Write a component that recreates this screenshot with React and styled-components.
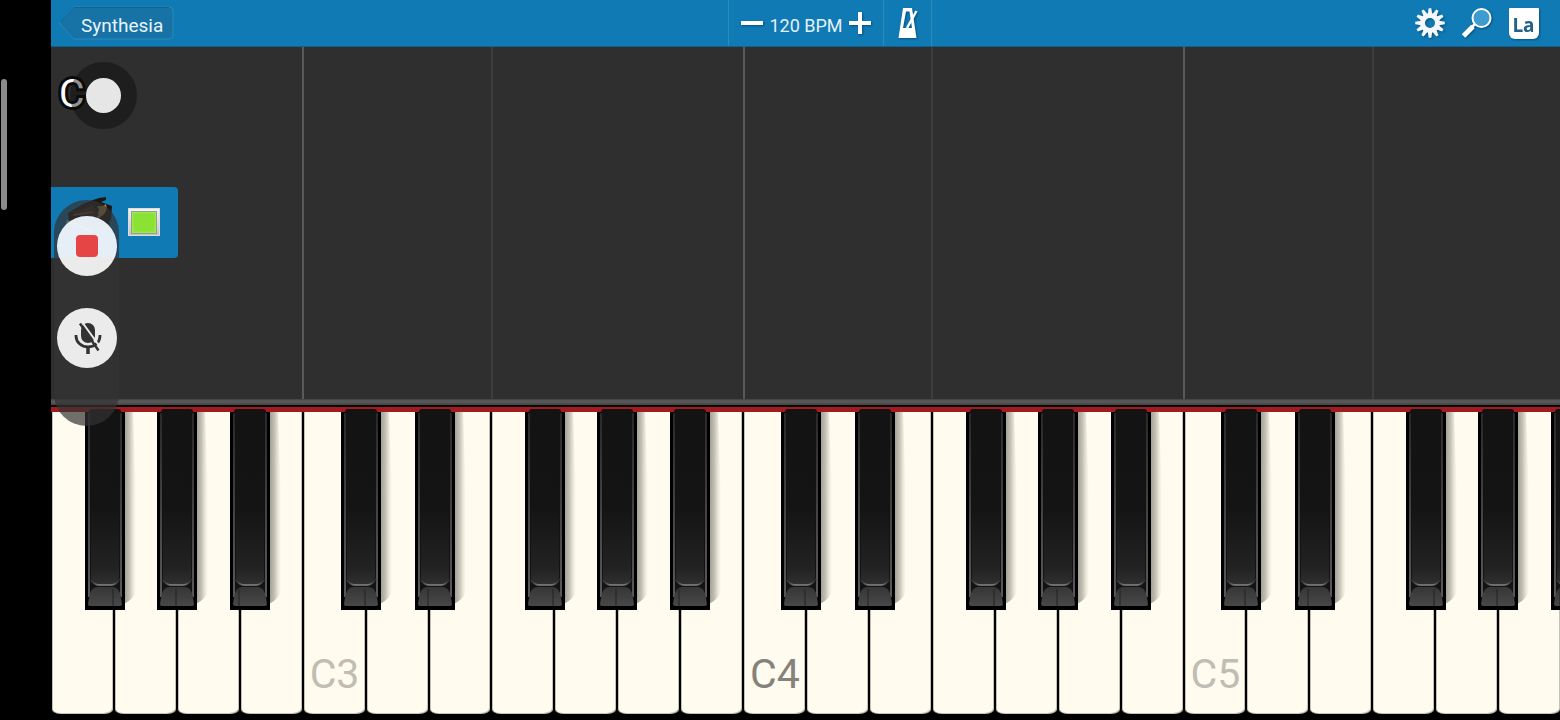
import React from "react";
import styled, { createGlobalStyle, css } from "styled-components";

const BLUE = "#107ab4";
const IVORY = "#fffbee";
const STAGE = "#2f2f2f";

const GlobalStyle = createGlobalStyle`
  * {
    box-sizing: border-box;
  }
  body {
    margin: 0;
    background: #000;
    font-family: Roboto, "Liberation Sans", sans-serif;
  }
  button {
    font-family: inherit;
    border: 0;
    padding: 0;
    margin: 0;
    background: none;
    cursor: pointer;
  }
`;

const NOTES = ["F", "G", "A", "B", "C", "D", "E"];
// how far each black key hangs over the next white key
const OVERHANG = { F: 12, G: 21, A: 31, C: 16, D: 27 };

const KEYS = Array.from({ length: 24 }, (_, i) => ({
  id: i,
  note: NOTES[i % 7],
  octave: 2 + Math.floor((i + 3) / 7)
}));

const Screen = styled.div`
  position: relative;
  display: flex;
  min-height: 100vh;
  overflow: hidden;
`;

const Gutter = styled.div`
  flex: 0 0 51px;
  padding: 79px 0 0 1px;
  background: #000;
`;

const ScrollThumb = styled.div`
  width: 6px;
  height: 131px;
  border-radius: 3px;
  background: #8b8b8b;
`;

const App = styled.main`
  flex: 1;
  min-width: 0;
  display: flex;
  flex-direction: column;
  overflow: hidden;
`;

const Toolbar = styled.header`
  display: grid;
  grid-template-columns: 1fr auto 1fr;
  height: 47px;
  background: ${BLUE};
  border-bottom: 1px solid #0d6291;
  color: #fff;
`;

const BackButton = styled.button`
  position: relative;
  display: flex;
  align-items: center;
  align-self: center;
  justify-self: start;
  width: 116px;
  height: 34px;
  margin-left: 7px;
  padding: 4px 0 0 23px;
  color: #e9f4fa;
  font-size: 19px;

  svg {
    position: absolute;
    inset: 0;
  }
  span {
    position: relative;
  }
`;

const Tempo = styled.div`
  display: flex;
  align-items: center;
  justify-content: center;
  gap: 6px;
  width: 155px;
  border-left: 1px solid #2c8abd;
`;

const TempoValue = styled.output`
  padding-top: 4px;
  color: #e4f1f8;
  font-size: 18px;
`;

const IconButton = styled.button`
  display: flex;
  align-items: center;
  justify-content: center;
  width: ${({ $width }) => $width}px;

  svg,
  span {
    filter: drop-shadow(1px 1px 1px rgba(0, 40, 70, 0.5));
  }
`;

const MetronomeButton = styled(IconButton)`
  margin-right: auto;
  border-left: 1px solid #2c8abd;
  border-right: 1px solid #2c8abd;
`;

const Tools = styled.div`
  display: flex;
  justify-content: flex-end;
  padding-right: 13px;
`;

const keyGrid = css`
  display: grid;
  grid-template-columns: repeat(24, 1fr);
`;

const Stage = styled.section`
  position: relative;
  flex: 1;
  display: flex;
  flex-direction: column;
  min-height: 352px;
  background: ${STAGE};
`;

const Lanes = styled.div`
  ${keyGrid}
  flex: 1;
  margin: 0 -1px 0 -1px;
`;

const LINE = { C: "2px solid #595959", F: "2px solid #3d3d3d" };

const Lane = styled.div`
  border-left: ${({ $note, $first }) => (!$first && LINE[$note]) || 0};
`;

const NoteName = styled.div`
  position: absolute;
  top: 24px;
  left: 8px;
  color: #fff;
  font-size: 39px;
  line-height: 47px;
  -webkit-text-stroke: 6px #0b0b0b;
  paint-order: stroke fill;
`;

const TouchDot = styled.div`
  position: absolute;
  top: 15px;
  left: 19px;
  width: 67px;
  height: 67px;
  border: 16px solid rgba(10, 10, 10, 0.45);
  border-radius: 50%;

  &::after {
    content: "";
    display: block;
    height: 35px;
    border-radius: 50%;
    background: #e6e6e6;
  }
`;

const DeviceCard = styled.div`
  position: absolute;
  top: 140px;
  left: 0;
  display: flex;
  align-items: flex-start;
  width: 127px;
  height: 71px;
  padding: 8px 0 0 10px;
  border-radius: 0 4px 4px 0;
  background: ${BLUE};
`;

const StatusLight = styled.div`
  width: 32px;
  height: 28px;
  margin: 13px 0 0 13px;
  padding: 2px;
  border: 1px solid #dcdcdc;
  background: linear-gradient(#f4f4f4, #c4c4c4);

  &::after {
    content: "";
    display: block;
    height: 21px;
    border: 1px solid #98a08d;
    background: #8ae234;
    box-shadow: inset 0 0 2px 1px #a4ea5c;
  }
`;

const Rail = styled.div`
  height: 8px;
  border-bottom: 2px solid #080808;
  background: linear-gradient(#404040, #5c5c5c 35%, #464646);
`;

const Felt = styled.div`
  height: 5px;
  background: #a21b20;
`;

const Keyboard = styled.section`
  ${keyGrid}
  height: 308px;
  margin-right: -1px;
  padding-bottom: 6px;
`;

const WhiteKey = styled.div`
  position: relative;
  display: flex;
  align-items: flex-end;
  padding: 0 0 15px 6px;
  border-left: 1px solid #000;
  border-right: 1px solid #000;
  border-radius: 0 0 10px 10px / 0 0 5px 5px;
  background: ${IVORY};
  box-shadow: inset 1px 0 #c4c1b6, inset -1px -1px #c4c1b6;
  color: ${({ $middle }) => ($middle ? "#85827b" : "#c0bdb2")};
  font-size: 41px;
  line-height: 50px;
`;

const BlackKeySlot = styled.div`
  position: absolute;
  z-index: 1;
  top: -5px;
  right: ${({ $overhang }) => -$overhang - 13}px;
  height: 206px;
  pointer-events: none;
`;

const Recorder = styled.aside`
  position: absolute;
  z-index: 2;
  top: 200px;
  left: 54px;
  display: flex;
  flex-direction: column;
  align-items: center;
  gap: 32px;
  width: 65px;
  height: 226px;
  padding-top: 16px;
  border-radius: 33px;
  background: rgba(51, 51, 51, 0.7);
`;

const RecorderButton = styled.button`
  display: flex;
  align-items: center;
  justify-content: center;
  width: 60px;
  height: 60px;
  border-radius: 50%;
  background: rgba(255, 255, 255, 0.9);
`;

const StopButton = styled(RecorderButton)`
  background: linear-gradient(rgba(240, 248, 255, 0.95) 41px, #ebebeb 41px);
`;

const StopMark = styled.span`
  width: 22px;
  height: 22px;
  border-radius: 4px;
  background: #e64545;
`;

const KeyDefs = () => (
  <svg width="0" height="0" style={{ position: "absolute" }} aria-hidden="true">
    <defs>
      <linearGradient id="keyTop" x1="0" y1="0" x2="0" y2="1">
        <stop offset="0" stopColor="#131313" />
        <stop offset="0.55" stopColor="#141414" />
        <stop offset="0.9" stopColor="#222" />
        <stop offset="1" stopColor="#303030" />
      </linearGradient>
      <linearGradient id="keyFront" x1="0" y1="0" x2="0" y2="1">
        <stop offset="0" stopColor="#363636" />
        <stop offset="1" stopColor="#484848" />
      </linearGradient>
      <linearGradient id="keyEdge" x1="0" y1="0" x2="0" y2="1">
        <stop offset="0" stopColor="#292929" />
        <stop offset="1" stopColor="#5a5a5c" />
      </linearGradient>
      <linearGradient id="keyLip">
        <stop offset="0" stopColor="#222" />
        <stop offset="0.3" stopColor="#858585" />
        <stop offset="0.7" stopColor="#858585" />
        <stop offset="1" stopColor="#222" />
      </linearGradient>
      <linearGradient id="keyShadow">
        <stop offset="0" stopColor="#8a887f" stopOpacity="0.85" />
        <stop offset="0.45" stopColor="#9a978c" stopOpacity="0.6" />
        <stop offset="1" stopColor="#c0bdb0" stopOpacity="0" />
      </linearGradient>
    </defs>
  </svg>
);

const BlackKey = ({ overhang }) => (
  <BlackKeySlot $overhang={overhang}>
    <svg width="53" height="206" viewBox="0 0 53 206" aria-hidden="true">
      <path d="M39 5H48L51 90V184Q49 192 39 197Z" fill="url(#keyShadow)" />
      <path d="M0 5H40V203H0Z" fill="#000" />
      <path d="M4 5Q4 2 7 2H33Q36 2 36 5V198H4Z" fill="#131313" />
      <path d="M3 6H5V190H3ZM35 6H37V190H35Z" fill="url(#keyEdge)" />
      <path d="M6 6H34V171Q31 178 26 178H14Q9 178 6 171Z" fill="url(#keyTop)" />
      <path d="M5 172Q9 178 14 178H26Q31 178 35 172" fill="none" stroke="url(#keyLip)" strokeWidth="1.600" />
      <path
        d="M3 197L4 190Q6 180 12 180H28Q34 180 36 190L37 197Q37 199 35 199H5Q3 199 3 197Z"
        fill="url(#keyFront)"
      />
      <path d={`M${40 - overhang} 182V199`} stroke="#222" strokeWidth="1" />
    </svg>
  </BlackKeySlot>
);

const GearIcon = () => (
  <svg width="32" height="32" viewBox="-16 -16 32 32" aria-hidden="true">
    {Array.from({ length: 12 }, (_, i) => (
      <path key={i} d="M-2.200 -9L-1.300 -14.800H1.300L2.200 -9Z" fill="#f4f8fa" transform={`rotate(${i * 30})`} />
    ))}
    <circle r="7.500" fill="none" stroke="#f4f8fa" strokeWidth="5" />
  </svg>
);

const SearchIcon = () => (
  <svg width="32" height="32" viewBox="0 0 32 32" aria-hidden="true">
    <path d="M2.500 29L12 19.500" stroke="#fff" strokeWidth="5" />
    <path d="M11 20L15 16" stroke="#fff" strokeWidth="2.500" />
    <circle cx="20.500" cy="11" r="9" fill="#3d9bd0" stroke="#fff" strokeWidth="2" />
  </svg>
);

const LabelBadge = styled.span`
  display: flex;
  align-items: center;
  justify-content: center;
  width: 30px;
  height: 31px;
  padding-top: 3px;
  border-radius: 1px 1px 6px 6px;
  background: #fff;
  color: #22618a;
  font-family: "Open Sans", "Noto Sans", sans-serif;
  font-size: 19px;
  font-weight: 700;
  line-height: 20px;
`;

const MetronomeIcon = () => (
  <svg width="24" height="32" viewBox="0 0 24 32" aria-hidden="true">
    <path
      d="M7 1H16L20.500 31H2.500ZM10 4.500L7 21H16L13.500 4.500Z"
      fill="#fff"
      fillRule="evenodd"
    />
    <path d="M11 21L20.500 4" stroke="#fff" strokeWidth="2.400" />
  </svg>
);

const PianoIcon = () => (
  <svg width="54" height="54" viewBox="0 0 54 54" aria-hidden="true">
    <path d="M7 18L22 9L32 5L38 3L45 2V5L40 7L51 11L50 25L34 37L8 28Z" fill="#1d1712" />
    <path d="M36 11Q42 12 45 9Q48 17 38 23L33 21Q41 16 36 11Z" fill="#a5834f" />
    <path d="M10 17L32 11L38 20L30 27Z" fill="#34231d" />
    <path d="M12 20L32 17" stroke="#80523a" strokeWidth="1.500" />
    <path d="M6 25L33 35V38L5 29Z" fill="#d7d3cb" />
    <path d="M34 35V49M47 26V39M9 30V42" stroke="#1d1712" strokeWidth="3" />
  </svg>
);

const MicOffIcon = () => (
  <svg width="30" height="34" viewBox="0 0 30 34" fill="none" aria-hidden="true">
    <rect x="9" y="2" width="14" height="20" rx="7" fill="#333" />
    <path d="M4 14V15A12 11 0 0 0 28 15V14" stroke="#333" strokeWidth="2.800" />
    <path d="M16 26V33" stroke="#333" strokeWidth="3.500" />
    <path d="M10 1L29.500 28" stroke="#ececec" strokeWidth="2" />
    <path d="M8 2.500L26.500 29.500" stroke="#333" strokeWidth="2.500" />
  </svg>
);

const Synth = () => (
  <Screen>
    <GlobalStyle />
    <KeyDefs />
    <Gutter>
      <ScrollThumb />
    </Gutter>
    <App>
      <Toolbar>
        <BackButton type="button">
          <svg width="116" height="34" viewBox="0 0 116 34" aria-hidden="true">
            <path
              d="M16 1H111Q115 1 115 5V29Q115 33 111 33H16L1 17Z"
              fill="#1772a5"
              stroke="#2a88bb"
            />
            <path d="M2 16L16 1.500H111" fill="none" stroke="#0f6492" />
          </svg>
          <span>Synthesia</span>
        </BackButton>
        <Tempo>
          <IconButton type="button" $width={22} aria-label="Slower">
            <svg width="22" height="22" viewBox="0 0 22 22" aria-hidden="true">
              <path d="M0 11H22" stroke="#fff" strokeWidth="4" />
            </svg>
          </IconButton>
          <TempoValue>120 BPM</TempoValue>
          <IconButton type="button" $width={22} aria-label="Faster">
            <svg width="22" height="22" viewBox="0 0 22 22" aria-hidden="true">
              <path d="M0 11H22M11 0V22" stroke="#fff" strokeWidth="4" />
            </svg>
          </IconButton>
        </Tempo>
        <Tools>
          <MetronomeButton type="button" $width={49} aria-label="Metronome">
            <MetronomeIcon />
          </MetronomeButton>
          <IconButton type="button" $width={47} aria-label="Settings">
            <GearIcon />
          </IconButton>
          <IconButton type="button" $width={47} aria-label="Zoom">
            <SearchIcon />
          </IconButton>
          <IconButton type="button" $width={47} aria-label="Note labels">
            <LabelBadge>La</LabelBadge>
          </IconButton>
        </Tools>
      </Toolbar>
      <Stage>
        <Lanes>
          {KEYS.map(({ id, note }) => (
            <Lane key={id} $note={note} $first={id === 0} />
          ))}
        </Lanes>
        <NoteName>C</NoteName>
        <TouchDot />
        <DeviceCard>
          <PianoIcon />
          <StatusLight />
        </DeviceCard>
      </Stage>
      <Rail />
      <Felt />
      <Keyboard>
        {KEYS.map(({ id, note, octave }) => (
          <WhiteKey key={id} $middle={octave === 4}>
            {note === "C" && `C${octave}`}
            {OVERHANG[note] && <BlackKey overhang={OVERHANG[note]} />}
          </WhiteKey>
        ))}
      </Keyboard>
    </App>
    <Recorder>
      <StopButton type="button" aria-label="Stop recording">
        <StopMark />
      </StopButton>
      <RecorderButton type="button" aria-label="Unmute microphone">
        <MicOffIcon />
      </RecorderButton>
    </Recorder>
  </Screen>
);

export default Synth;
